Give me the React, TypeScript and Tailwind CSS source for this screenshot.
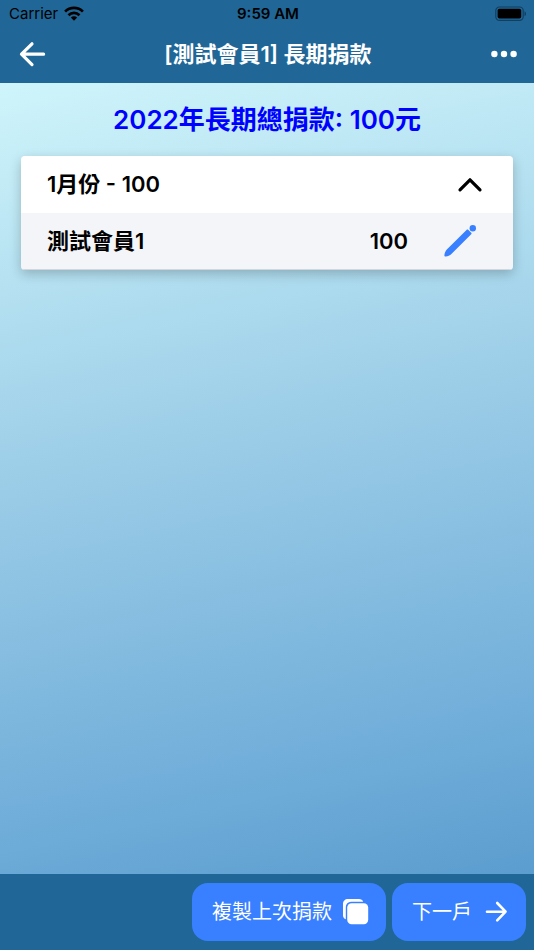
import { useState } from 'react'

type Donation = {
  id: number
  name: string
  amount: number
}

type Month = {
  month: number
  donations: Donation[]
}

const year = 2022

const months: Month[] = [
  { month: 1, donations: [{ id: 1, name: '測試會員1', amount: 100 }] }
]

const sum = (donations: Donation[]) => donations.reduce((total, d) => total + d.amount, 0)

const WifiIcon = () => (
  <svg className="w-5 h-4" viewBox="0 0 20 16" fill="none" stroke="currentColor" strokeWidth={2.7} aria-hidden="true">
    <path d="M1.1 5.6a12.6 12.6 0 0 1 17.8 0" />
    <path d="M4.5 9.2a7.9 7.9 0 0 1 11 0" />
    <path d="M10 14.8 6.8 11.600a4.600 4.600 0 0 1 6.400 0Z" fill="currentColor" stroke="none" />
  </svg>
)

const BatteryIcon = () => (
  <svg className="w-8 h-4" viewBox="0 0 32 16" aria-hidden="true">
    <rect x="0.8" y="1" width="27.4" height="13.4" rx="3.6" fill="none" stroke="#113f60" strokeWidth="1.2" />
    <rect x="2.6" y="2.8" width="23.6" height="9.8" rx="1.8" fill="#000" />
    <path d="M29.500 5.200c2 .8 2 4.200 0 5Z" fill="#113f60" />
  </svg>
)

const BackIcon = () => (
  <svg className="w-8 h-8" viewBox="0 0 32 32" fill="none" stroke="currentColor" strokeWidth={3.2} strokeLinecap="round" strokeLinejoin="round" aria-hidden="true">
    <path d="M16 5.800 5.500 16.200 16 26.600M6 16.200h21.600" />
  </svg>
)

const ForwardIcon = () => (
  <svg className="w-7 h-7" viewBox="0 0 28 28" fill="none" stroke="currentColor" strokeWidth={2.6} strokeLinecap="round" strokeLinejoin="round" aria-hidden="true">
    <path d="m15.200 5 8.400 8.700-8.400 8.700M23.400 13.700H5" />
  </svg>
)

const MoreIcon = () => (
  <svg className="w-8 h-8" viewBox="0 0 32 32" fill="currentColor" aria-hidden="true">
    <circle cx="6.4" cy="16" r="3.2" />
    <circle cx="16" cy="16" r="3.2" />
    <circle cx="25.6" cy="16" r="3.2" />
  </svg>
)

const ChevronIcon = ({ open }: { open: boolean }) => (
  <svg className={open ? 'w-7 h-7' : 'w-7 h-7 rotate-180'} viewBox="0 0 28 28" fill="none" stroke="currentColor" strokeWidth={3.2} strokeLinecap="round" strokeLinejoin="round" aria-hidden="true">
    <path d="M4 18.800 14 8.800l10 10" />
  </svg>
)

const PencilIcon = () => (
  <svg className="w-9 h-9" viewBox="0 0 36 36" fill="currentColor" aria-hidden="true">
    <path d="M24.500 6.900 4.800 26.600C3.400 28.100 2.500 30.400 2.400 32.200c-.1 1 .4 1.500 1.400 1.400 2-.2 4.100-1.100 5.600-2.600L29.200 11.200c.5-.5.5-.9 0-1.400l-3-3c-.6-.5-1.200-.4-1.700.1Z" />
    <circle cx="30.800" cy="5.200" r="3.200" />
  </svg>
)

const CopyIcon = () => (
  <svg className="w-7 h-7" viewBox="0 0 28 28" fill="currentColor" aria-hidden="true">
    <path d="M6 1h11c2 0 3.700 1 4.200 2.800H9a5.200 5.200 0 0 0-5.200 5.200v12.200C2.100 20.700 1 19.200 1 17.200V6c0-3 2-5 5-5Z" />
    <rect x="5.200" y="5.200" width="21" height="21" rx="4.400" />
  </svg>
)

const App = () => {
  const [openMonth, setOpenMonth] = useState<number | null>(1)

  const total = months.reduce((acc, m) => acc + sum(m.donations), 0)

  return (
    <div className="min-h-screen flex flex-col font-['Inter','Noto_Sans_CJK_TC',sans-serif] text-black bg-[#206797]">
      <header className="bg-[#206797]">
        <div className="grid grid-cols-3 items-center h-7 pl-[9px] pr-[7px] text-[15px]">
          <div className="flex items-center gap-[6px]">
            <span>Carrier</span>
            <WifiIcon />
          </div>
          <span className="text-center font-semibold">9:59 AM</span>
          <div className="flex justify-end">
            <BatteryIcon />
          </div>
        </div>
        <div className="flex items-center justify-between h-[55px] pl-4 pr-[14px] pb-[3px] text-white">
          <button type="button" aria-label="返回">
            <BackIcon />
          </button>
          <h1 className="text-[22px] font-semibold">[測試會員1] 長期捐款</h1>
          <button type="button" aria-label="更多">
            <MoreIcon />
          </button>
        </div>
      </header>

      <main className="flex-1 bg-[linear-gradient(168deg,#cff5fb_0%,#95c8e5_50%,#6dabd8_85%,#5b9dcf_100%)]">
        <h2 className="pt-4 text-center text-[26px] leading-[42px] font-semibold text-[#0000ff]">
          {year}年長期總捐款: {total}元
        </h2>

        <div className="mx-[21px] mt-[15px] rounded overflow-hidden shadow-[0_4px_12px_rgba(0,0,0,0.22)]">
          {months.map(({ month, donations }) => (
            <section key={month}>
              <button
                type="button"
                aria-expanded={openMonth === month}
                onClick={() => setOpenMonth(openMonth === month ? null : month)}
                className="flex items-center justify-between w-full h-[57px] pl-[26px] pr-[29px] bg-white text-[22px] font-semibold"
              >
                <span>{month}月份 - {sum(donations)}</span>
                <ChevronIcon open={openMonth === month} />
              </button>
              {openMonth === month && (
                <ul className="bg-[#f4f5f9]">
                  {donations.map((d) => (
                    <li key={d.id} className="flex items-center h-[57px] pl-[26px] pr-[35px] border-b border-[#d3d6dc] text-[22px] font-semibold">
                      <span className="flex-1">{d.name}</span>
                      <span>{d.amount}</span>
                      <button type="button" aria-label="編輯" className="ml-[34px] text-[#3880ff]">
                        <PencilIcon />
                      </button>
                    </li>
                  ))}
                </ul>
              )}
            </section>
          ))}
        </div>
      </main>

      <footer className="flex justify-end gap-[6px] px-2 py-[9px] bg-[#206797] text-white text-[20px]">
        <button type="button" className="flex items-center gap-[10px] h-[58px] px-4 pl-5 rounded-2xl bg-[#3880ff]">
          複製上次捐款
          <CopyIcon />
        </button>
        <button type="button" className="flex items-center gap-[10px] h-[58px] px-4 pl-5 rounded-2xl bg-[#3880ff]">
          下一戶
          <ForwardIcon />
        </button>
      </footer>
    </div>
  )
}

export default App
